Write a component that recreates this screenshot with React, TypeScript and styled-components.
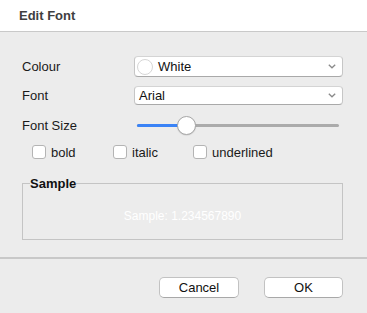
import React from "react";
import styled, { createGlobalStyle } from "styled-components";

const Global = createGlobalStyle`
  html, body { margin: 0; padding: 0; }
  body {
    width: 367px;
    height: 313px;
    overflow: hidden;
    background: #ececec;
    font-family: "Liberation Sans", Arial, Helvetica, sans-serif;
    font-size: 13px;
    color: #1a1a1a;
  }
`;

const Window = styled.div`
  width: 367px;
  height: 313px;
  display: flex;
  flex-direction: column;
  background: #ececec;
`;

const TitleBar = styled.div`
  height: 32px;
  box-sizing: border-box;
  background: #ffffff;
  border-bottom: 1px solid #c9c9c9;
  display: flex;
  align-items: center;
  padding-left: 19px;
  font-weight: bold;
  font-size: 13px;
  color: #404040;
`;

const Body = styled.div`
  padding: 24px 24px 0 22px;
  display: flex;
  flex-direction: column;
`;

const FormRow = styled.div<{ $h: number; $mt: number }>`
  display: grid;
  grid-template-columns: 112px 1fr;
  align-items: center;
  height: ${(p) => p.$h}px;
  margin-top: ${(p) => p.$mt}px;
`;

const Label = styled.div`
  font-size: 13px;
  color: #1a1a1a;
`;

const Select = styled.div`
  height: 100%;
  box-sizing: border-box;
  background: #ffffff;
  border: 1px solid #c6c6c6;
  border-top-color: #d4d4d4;
  border-bottom-color: #a9a9a9;
  border-radius: 4px;
  display: flex;
  align-items: center;
  padding: 0 6px 0 2px;
  gap: 5px;
  font-size: 13px;
  color: #111;
`;

const Swatch = styled.span`
  width: 16px;
  height: 16px;
  box-sizing: border-box;
  border-radius: 50%;
  border: 1px solid #d6d6d6;
  background: #ffffff;
  flex: none;
`;

const SelectText = styled.span<{ $pl?: number }>`
  flex: 1;
  padding-left: ${(p) => p.$pl ?? 0}px;
`;

const Chevron = () => (
  <svg width="8" height="5" viewBox="0 0 8 5">
    <path d="M0.8 0.8 L4 3.8 L7.2 0.8" fill="none" stroke="#8a8a8a" strokeWidth="1.3" />
  </svg>
);

const SliderWrap = styled.div`
  position: relative;
  height: 20px;
  margin: 0 4px 0 3px;
  display: flex;
  align-items: center;
`;

const Track = styled.div`
  position: relative;
  width: 100%;
  height: 3px;
  border-radius: 2px;
  background: #ababab;
`;

const Fill = styled.div`
  position: absolute;
  left: 0;
  top: 0;
  bottom: 0;
  border-radius: 2px;
  background: #3a83f6;
`;

const Knob = styled.div`
  position: absolute;
  top: 50%;
  width: 19px;
  height: 19px;
  box-sizing: border-box;
  margin-left: -9.5px;
  margin-top: -9.5px;
  border-radius: 50%;
  background: #ffffff;
  border: 1px solid #a8a8a8;
  box-shadow: 0 0.5px 1px rgba(0, 0, 0, 0.15);
`;

const CheckRow = styled.div`
  display: grid;
  grid-template-columns: 81px 80px auto;
  align-items: center;
  height: 18px;
  margin-top: 8px;
  padding-left: 10px;
`;

const CheckItem = styled.label`
  display: flex;
  align-items: center;
  gap: 5px;
  font-size: 13px;
  color: #1a1a1a;
`;

const Box = styled.span`
  width: 14px;
  height: 14px;
  box-sizing: border-box;
  border: 1px solid #b4b4b4;
  border-radius: 3px;
  background: #ffffff;
  flex: none;
`;

const Group = styled.fieldset`
  margin: 15px 0 0 0;
  padding: 0;
  border: 1px solid #c4c4c4;
`;

const Legend = styled.legend`
  padding: 0;
  margin-left: 7px;
  font-weight: bold;
  font-size: 13px;
  color: #111;
  line-height: 15px;
`;

const SampleArea = styled.div`
  height: 48px;
  display: flex;
  align-items: center;
  justify-content: center;
  color: #ffffff;
  font-size: 12px;
  padding-top: 1px;
  box-sizing: border-box;
`;

const Separator = styled.div`
  margin-top: 17px;
  height: 2px;
  background: #c8c8c8;
`;

const ButtonBar = styled.div`
  display: flex;
  justify-content: flex-end;
  gap: 25px;
  padding: 18px 24px 0 0;
`;

const Button = styled.button<{ $w: number }>`
  width: ${(p) => p.$w}px;
  height: 21px;
  box-sizing: border-box;
  background: #ffffff;
  border: 1px solid #c2c2c2;
  border-bottom-color: #a8a8a8;
  border-radius: 5px;
  font-family: "Liberation Sans", Arial, Helvetica, sans-serif;
  font-size: 13px;
  color: #111;
  padding: 0;
`;

export default function App() {
  const value = 0.245;
  return (
    <>
      <Global />
      <Window>
        <TitleBar>Edit Font</TitleBar>
        <Body>
          <FormRow $h={21} $mt={0}>
            <Label>Colour</Label>
            <Select>
              <Swatch />
              <SelectText>White</SelectText>
              <Chevron />
            </Select>
          </FormRow>
          <FormRow $h={19} $mt={9}>
            <Label>Font</Label>
            <Select>
              <SelectText $pl={2}>Arial</SelectText>
              <Chevron />
            </Select>
          </FormRow>
          <FormRow $h={20} $mt={10}>
            <Label>Font Size</Label>
            <SliderWrap>
              <Track>
                <Fill style={{ width: `${value * 100}%` }} />
                <Knob style={{ left: `${value * 100}%` }} />
              </Track>
            </SliderWrap>
          </FormRow>
          <CheckRow>
            <CheckItem>
              <Box />
              bold
            </CheckItem>
            <CheckItem>
              <Box />
              italic
            </CheckItem>
            <CheckItem>
              <Box />
              underlined
            </CheckItem>
          </CheckRow>
          <Group>
            <Legend>Sample</Legend>
            <SampleArea>Sample: 1.234567890</SampleArea>
          </Group>
        </Body>
        <Separator />
        <ButtonBar>
          <Button $w={80}>Cancel</Button>
          <Button $w={79}>OK</Button>
        </ButtonBar>
      </Window>
    </>
  );
}
